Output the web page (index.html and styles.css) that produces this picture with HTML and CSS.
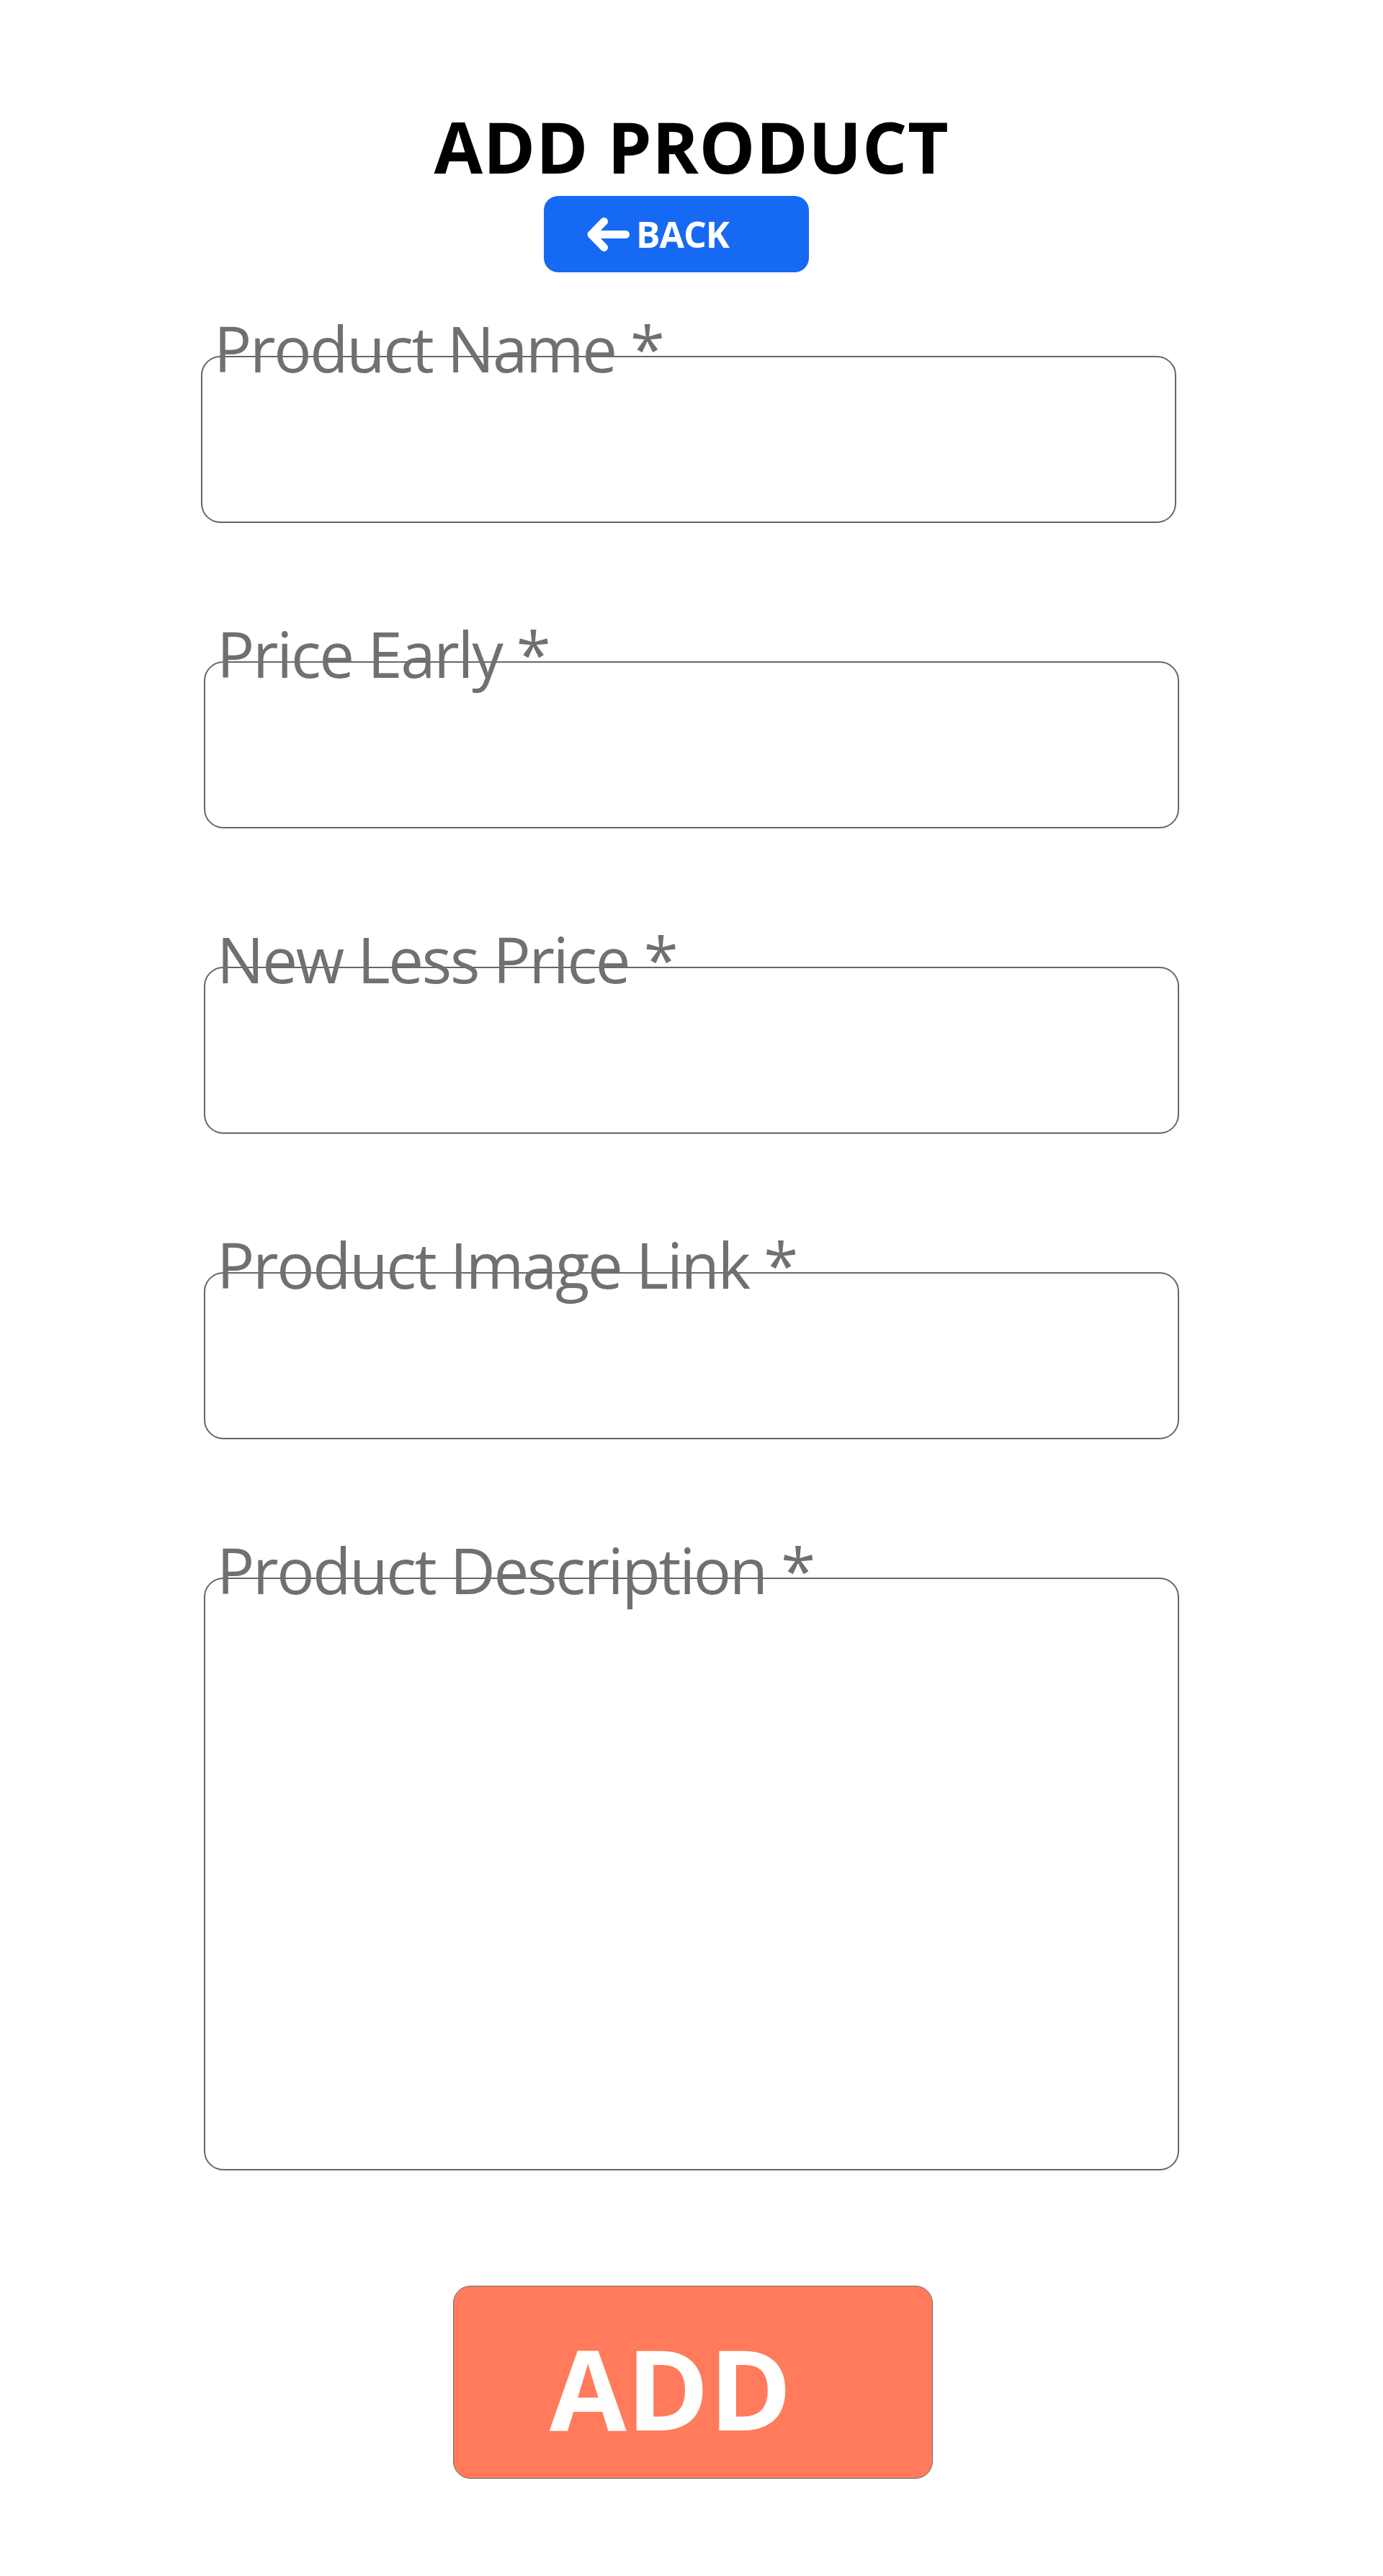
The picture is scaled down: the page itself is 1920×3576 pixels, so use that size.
FILE: index.html
```html
<!DOCTYPE html>
<html lang="en">
<head>
	<meta charset="UTF-8">
	<title>Add Product</title>
	<link rel="stylesheet" href="styles.css">
</head>
<body>
	<div id="wrapper">
		<h1 class="title">ADD PRODUCT</h1>
		<!-- back button -->
		<div class="back-row">
			<a class="back-btn" href="javascript:">
				<svg viewBox="0 0 59 47" aria-hidden="true">
					<path d="M53.5 23.5H6M6 23.5L23.5 5.5M6 23.5L23.5 41.5" fill="none" stroke="#fff" stroke-width="11" stroke-linecap="round" stroke-linejoin="round"/>
				</svg>
				<span>BACK</span>
			</a>
		</div>
		<!-- form -->
		<form class="product-form" onsubmit="return false">
			<div class="field field-first">
				<label class="field-label" for="name">Product Name *</label>
				<input class="field-input" id="name" type="text">
			</div>
			<div class="field">
				<label class="field-label" for="early">Price Early *</label>
				<input class="field-input" id="early" type="text">
			</div>
			<div class="field">
				<label class="field-label" for="less">New Less Price *</label>
				<input class="field-input" id="less" type="text">
			</div>
			<div class="field">
				<label class="field-label" for="image">Product Image Link *</label>
				<input class="field-input" id="image" type="text">
			</div>
			<div class="field">
				<label class="field-label" for="desc">Product Description *</label>
				<textarea class="field-input field-area" id="desc"></textarea>
			</div>
			<div class="submit-row">
				<button class="add-btn" type="submit">ADD</button>
			</div>
		</form>
	</div>
</body>
</html>
```

FILE: styles.css
```css
html, body {
	margin: 0;
	padding: 0;
	background: #fff;
	font-family: "Open Sans", "Noto Sans", sans-serif;
}
.title {
	margin: 154px 0 0;
	font-size: 98px;
	line-height: 98px;
	font-weight: 700;
	text-align: center;
	color: #000;
	letter-spacing: 0.6px;
}
.back-row {
	display: flex;
	justify-content: center;
	margin-top: 20px;
}
.back-btn {
	display: flex;
	align-items: center;
	justify-content: center;
	box-sizing: border-box;
	width: 368px;
	height: 106px;
	margin-right: 42px;
	padding-right: 51px;
	background: #1669f2;
	border-radius: 20px;
	color: #fff;
	text-decoration: none;
	font-size: 50px;
	font-weight: 700;
	letter-spacing: -1px;
}
.back-btn svg {
	width: 59px;
	height: 47px;
	margin-right: 9px;
}
.product-form {
	width: 1354px;
	margin: 62px auto 0;
}
.field + .field {
	margin-top: 138px;
}
.field-first {
	margin-left: -4px;
	margin-right: 4px;
}
.field-label {
	display: block;
	height: 54px;
	padding-left: 18px;
	font-size: 87px;
	line-height: 87px;
	color: #707070;
	letter-spacing: -2.3px;
	white-space: nowrap;
}
.field-input {
	display: block;
	box-sizing: border-box;
	width: 100%;
	height: 232px;
	margin: 0;
	padding: 0 26px;
	border: 2px solid #666;
	border-radius: 27px;
	background: transparent;
	font-family: inherit;
	font-size: 60px;
	color: #333;
	outline: none;
}
.field-area {
	height: 823px;
	resize: none; /* no drag handle */
}
.submit-row {
	display: flex;
	justify-content: center;
	margin-top: 160px;
}
.add-btn {
	box-sizing: border-box;
	width: 666px;
	height: 268px;
	margin-left: 4px;
	padding: 12px 62px 0 0;
	background: #ff7b5c;
	border: 1px solid #707070;
	border-radius: 24px;
	color: #fff;
	font-family: inherit;
	font-size: 155px;
	font-weight: 700;
	line-height: 1;
	cursor: pointer;
}
```
